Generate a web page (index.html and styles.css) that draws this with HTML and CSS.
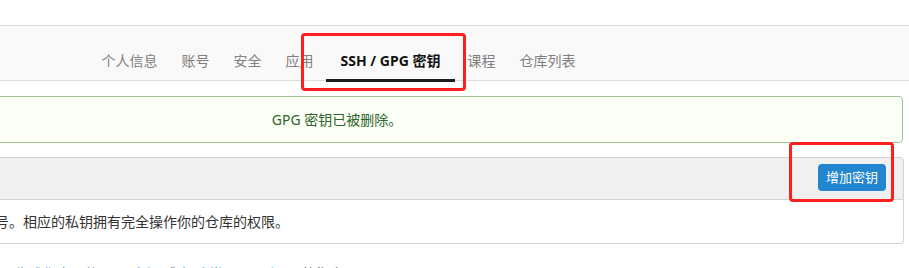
FILE: index.html
```html
<!DOCTYPE html>
<html lang="zh-CN">
<head>
<meta charset="utf-8">
<title>SSH / GPG 密钥</title>
<link rel="stylesheet" href="styles.css">
</head>
<body>
<div class="topgap"></div>
<nav class="navbar">
  <div class="nav-inner">
    <a class="item">个人信息</a>
    <a class="item">账号</a>
    <a class="item">安全</a>
    <a class="item">应用</a>
    <a class="item active">SSH / GPG 密钥</a>
    <a class="item">课程</a>
    <a class="item">仓库列表</a>
  </div>
</nav>
<main class="page">
  <div class="alert">GPG 密钥已被删除。</div>
  <div class="panel-head">
    <h4 class="title">管理 SSH 密钥</h4>
    <button class="btn">增加密钥</button>
  </div>
  <div class="panel-body">这些 SSH 公钥已经关联到你的账号。相应的私钥拥有完全操作你的仓库的权限。</div>
  <p class="help"><strong>需要帮助？</strong>请查看 GitHub 关于<a class="link">生成你自己的 SSH 密钥</a> 或 <a class="link">解决常见 SSH 问题</a> 的指南。</p>
</main>
<div class="mark mark-tab"></div>
<div class="mark mark-btn"></div>
</body>
</html>
```
FILE: styles.css
```css
html, body {
  margin: 0;
  padding: 0;
}
body {
  font-family: "Noto Sans", "Noto Sans CJK SC", sans-serif;
  font-size: 14px;
  color: #333;
  background: #fff;
  overflow: hidden;
}
.topgap {
  height: 25px;
}
.navbar {
  border-top: 1px solid #ddd;
  border-bottom: 1px solid #ddd;
  background: #f9f9f9;
  height: 54px;
}
.nav-inner {
  margin-left: -229px;
  width: 1135px;
  height: 54px;
  display: flex;
  justify-content: center;
  align-items: flex-end;
}
.item {
  padding: 0 12px 8px;
  line-height: 20px;
  color: #808080;
  border-bottom: 3px solid transparent;
  margin-bottom: -2px;
  cursor: pointer;
}
.item.active {
  padding: 0 15px 8px;
  color: #111;
  font-weight: 700;
  border-bottom-color: #1b1c1d;
}
.page {
  margin-left: -229px;
  width: 1133px;
}
.alert {
  margin: 15px 1px 0 0;
  border: 1px solid #a3c293;
  background: #fcfff5;
  color: #2c662d;
  border-radius: 4px;
  padding: 12px;
  line-height: 21px;
  text-align: center;
}
.panel-head {
  margin-top: 14px;
  border: 1px solid #d4d4d5;
  border-radius: 4px 4px 0 0;
  background: #f0f0f0;
  display: flex;
  justify-content: space-between;
  align-items: center;
  padding: 6px 17px 8px 14px;
}
.title {
  margin: 0;
  font-size: 14px;
  font-weight: 700;
  color: #333;
}
.btn {
  background: #2185d0;
  color: #fff;
  border: none;
  border-radius: 4px;
  height: 27px;
  padding: 0 8px;
  font-family: "Noto Sans", "Noto Sans CJK SC", sans-serif;
  font-size: 13px;
  line-height: 27px;
}
.panel-body {
  border: 1px solid #d4d4d5;
  border-top: none;
  border-radius: 0 0 4px 4px;
  padding: 12px 14px 12px 22px;
  line-height: 19px;
}
.help {
  margin: 20px 0 0;
  padding-left: 50px;
  line-height: 20px;
  white-space: nowrap;
}
.link {
  color: #4183c4;
}
.mark {
  position: absolute;
  box-sizing: border-box;
  border: 3px solid #ff1f1f;
  border-radius: 4px;
}
.mark-tab {
  left: 301px;
  top: 33px;
  width: 165px;
  height: 58px;
}
.mark-btn {
  left: 789px;
  top: 142px;
  width: 105px;
  height: 60px;
}
```
